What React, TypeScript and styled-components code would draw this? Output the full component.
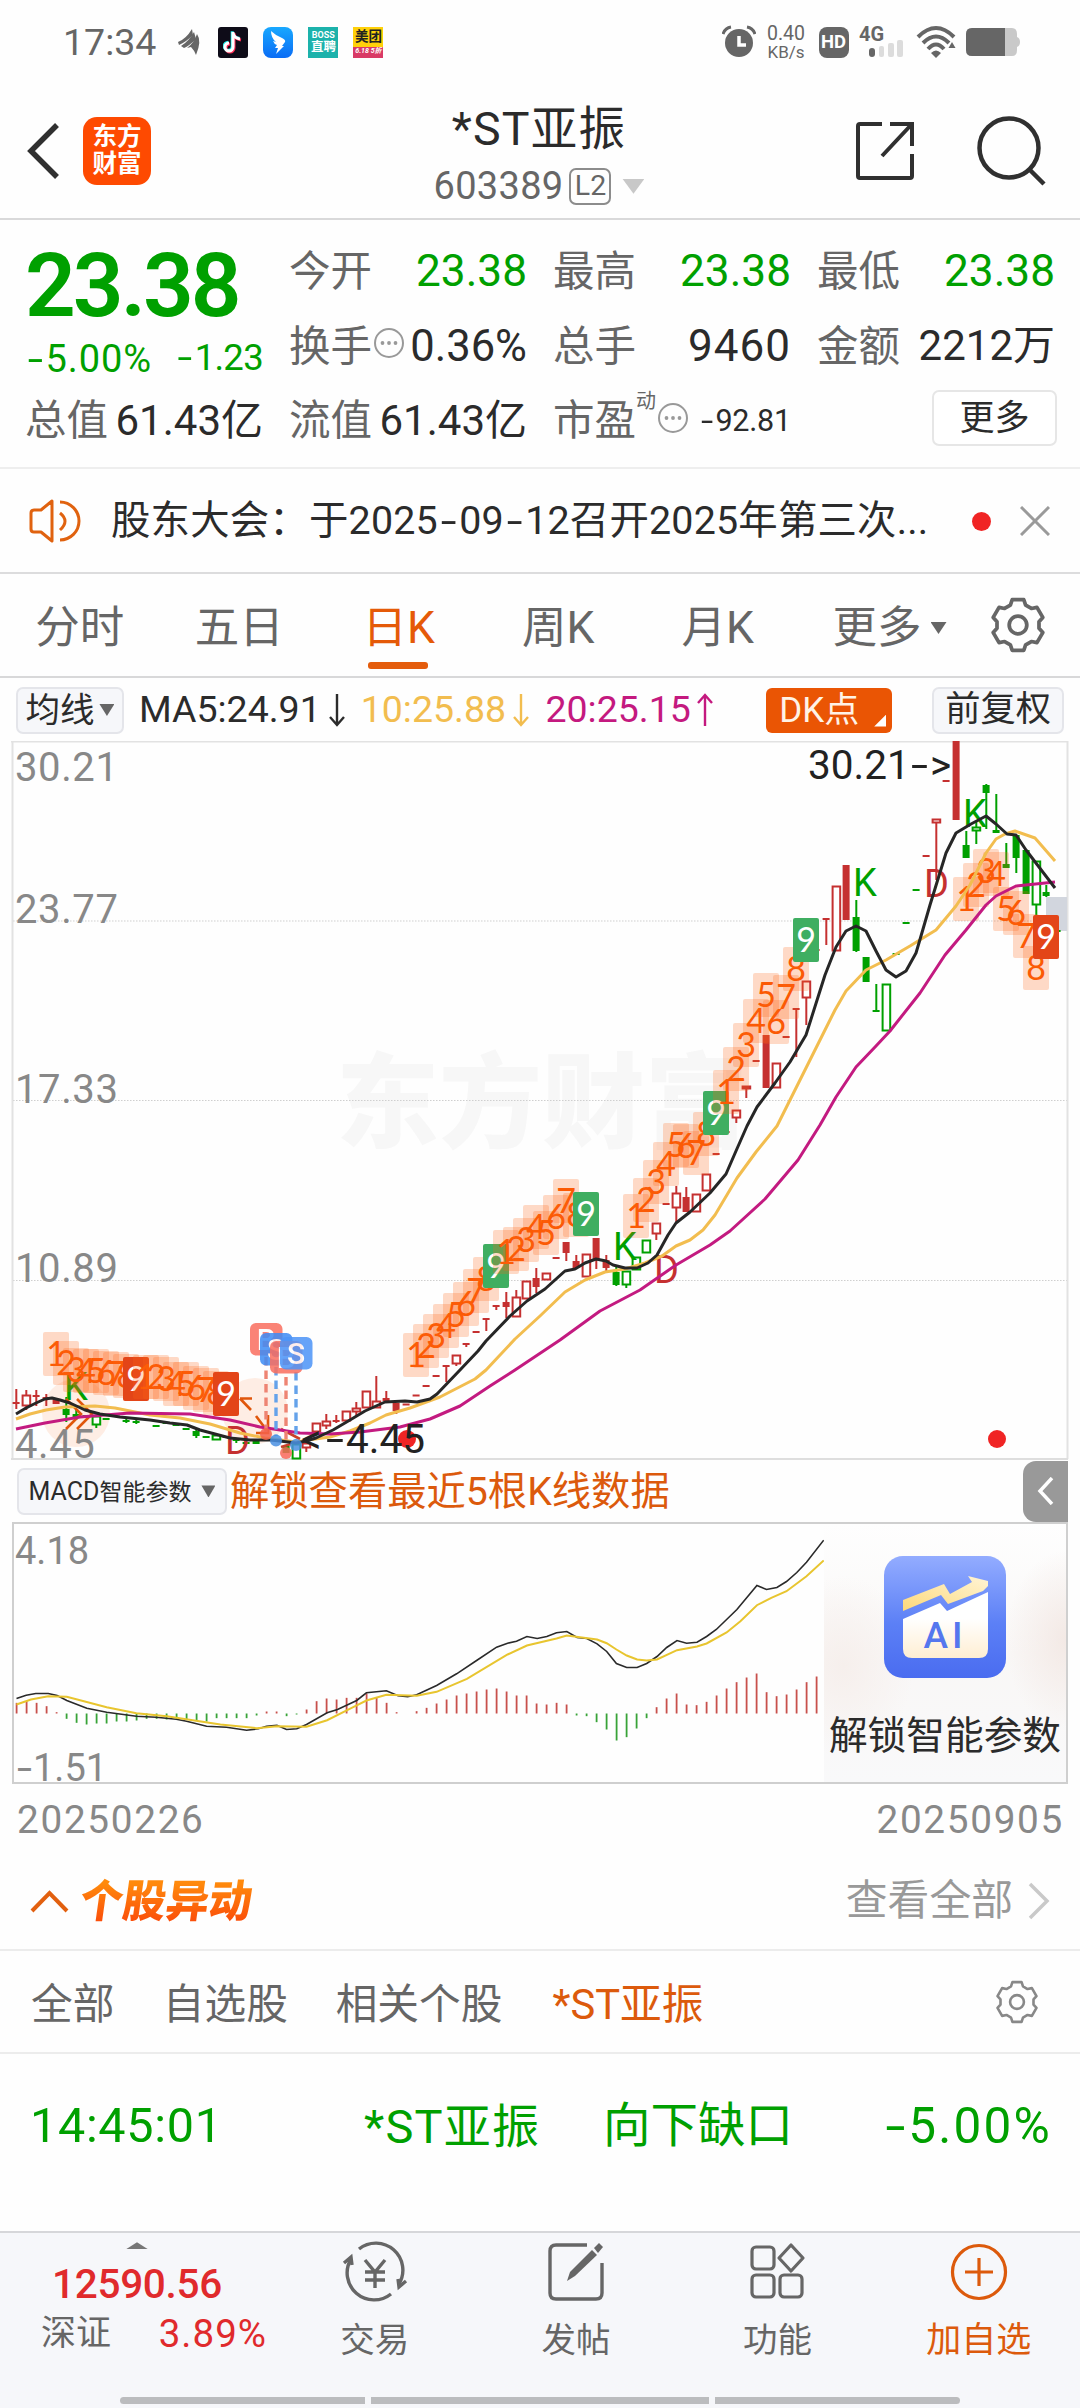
import React from "react";
import styled, { createGlobalStyle, css } from "styled-components";

const SANS = `Roboto, "Noto Sans CJK SC", "Liberation Sans", sans-serif`;
const GREEN = "#00a000";
const ORANGE = "#dc5a0c";
const RED = "#e02a2c";
const CANDLE_RED = "#c53030";

const GlobalStyle = createGlobalStyle`
  * { box-sizing: border-box; }
  html, body { margin: 0; padding: 0; background: #fff; }
  body { font-family: ${SANS}; line-height: 1; color: #2b2b2b; width: 1080px; overflow-x: hidden; }
  svg { display: block; flex: none; }
`;

const Screen = styled.div`
  width: 1080px;
  height: 2408px;
  display: flex;
  flex-direction: column;
  background: #fefefe;
  overflow: hidden;
  white-space: nowrap;
`;

/* ---------- text helpers ---------- */

const Txt = styled.span<{ $s: number; $c?: string; $w?: number; $ls?: number }>`
  font-size: ${(p) => p.$s}px;
  color: ${(p) => p.$c ?? "#2b2b2b"};
  font-weight: ${(p) => p.$w ?? 400};
  letter-spacing: ${(p) => p.$ls ?? 0}px;
`;

const Dash = styled.span`
  display: inline-block;
  width: 0.54em;
  text-align: center;
  letter-spacing: 0;
  transform: scaleX(1.45);
`;

function Num({ children }: { children: string }) {
  const parts = children.split("-");
  return (
    <>
      {parts.map((p, i) => (
        <React.Fragment key={i}>
          {i > 0 && <Dash>-</Dash>}
          {p}
        </React.Fragment>
      ))}
    </>
  );
}

const Triangle = styled.i<{ $w: number; $h: number; $c: string; $up?: boolean }>`
  display: block;
  width: ${(p) => p.$w}px;
  height: ${(p) => p.$h}px;
  background: ${(p) => p.$c};
  clip-path: ${(p) => (p.$up ? "polygon(50% 0, 100% 100%, 0 100%)" : "polygon(0 0, 100% 0, 50% 100%)")};
`;

/* ---------- status bar ---------- */

const StatusBar = styled.header`
  height: 84px;
  padding: 1px 60px 0 63px;
  display: flex;
  align-items: center;
  justify-content: space-between;
`;

const StatusGroup = styled.div<{ $gap: number }>`
  display: flex;
  align-items: center;
  gap: ${(p) => p.$gap}px;
`;

const Clock = styled.span`
  font-size: 37.5px;
  color: #666;
  margin-right: 6px;
`;

const AppTile = styled.div<{ $bg: string; $r: number }>`
  width: 30px;
  height: 31px;
  border-radius: ${(p) => p.$r}px;
  background: ${(p) => p.$bg};
  display: flex;
  flex-direction: column;
  align-items: center;
  justify-content: center;
  gap: 1px;
`;

const Promo = styled.span`
  font-size: 7px;
  font-style: italic;
  font-weight: 700;
  color: #fff;
  margin-top: 3px;
`;

const Speed = styled.div`
  display: flex;
  flex-direction: column;
  align-items: center;
  gap: 1px;
  width: 40px;
  margin-right: 2px;
`;

/* ---------- title bar ---------- */

const TitleBar = styled.div`
  height: 136px;
  padding: 0 34px 0 26px;
  border-bottom: 2px solid #d9d9da;
  display: grid;
  grid-template-columns: 300px 1fr 300px;
  align-items: center;
`;

const TitleLeft = styled.div`
  display: flex;
  align-items: center;
  gap: 23px;
`;

const Logo = styled.div`
  width: 68px;
  height: 68px;
  border-radius: 14px;
  background: #fe4a01;
  display: flex;
  flex-direction: column;
  align-items: center;
  justify-content: center;
  gap: 3px;
`;

const TitleMid = styled.div`
  display: flex;
  flex-direction: column;
  align-items: center;
  gap: 15px;
  padding-left: 6px;
  padding-top: 9px;
`;

const CodeLine = styled.div`
  display: flex;
  align-items: center;
  gap: 6px;
`;

const Level = styled.span`
  width: 42px;
  height: 37px;
  border: 2px solid #8c8c8c;
  border-radius: 7px;
  display: flex;
  align-items: center;
  justify-content: center;
  margin-right: 5px;
`;

const TitleRight = styled.div`
  display: flex;
  align-items: center;
  justify-content: flex-end;
  gap: 61px;
`;

/* ---------- quote ---------- */

const Quote = styled.section`
  height: 249px;
  padding: 14px 25px 0 25px;
  border-bottom: 2px solid #eeeeee;
  display: grid;
  grid-template-columns: repeat(4, 238px);
  grid-template-rows: 75px 75px 74px;
  column-gap: 26px;
`;

const PriceBlock = styled.div`
  grid-row: 1 / span 2;
  display: flex;
  flex-direction: column;
  padding-top: 7px;
  gap: 10px;
`;

const ChangeLine = styled.div`
  display: flex;
  justify-content: space-between;
`;

const Cell = styled.div`
  display: flex;
  align-items: center;
  justify-content: space-between;
`;

const Label = styled.span`
  display: flex;
  align-items: center;
  font-size: 41.5px;
  color: #666;
`;

const InfoIcon = styled.svg`
  width: 32px;
  height: 32px;
  margin: -6px 0 0 1px;
`;

const Sup = styled.sup`
  font-size: 20px;
  align-self: flex-start;
  margin: -9px 0 0 0;
  line-height: 1;
`;

const MoreButton = styled.button`
  justify-self: end;
  align-self: center;
  margin: -5px -2px 0 0;
  width: 125px;
  height: 56px;
  border: 2px solid #e6e6e6;
  border-radius: 7px;
  background: #fff;
  color: #2b2b2b;
  font: 400 35px ${SANS};
  line-height: 1;
  padding: 0;
`;

/* ---------- notice ---------- */

const Notice = styled.section`
  height: 105px;
  padding: 2px 30px 0 29px;
  border-bottom: 2px solid #dcdcdd;
  display: flex;
  align-items: center;
`;

const NoticeText = styled.span`
  margin-left: 30px;
  width: 861px;
  font-size: 39.4px;
  letter-spacing: 0.2px;
  color: #2b2b2b;
`;

const Dot = styled.i`
  width: 19px;
  height: 19px;
  border-radius: 50%;
  background: #f02424;
  margin-right: 29px;
`;

/* ---------- period tabs ---------- */

const Tabs = styled.nav`
  height: 104px;
  border-bottom: 2px solid #d8d8d9;
  display: flex;
  align-items: center;
`;

const Tab = styled.div<{ $on?: boolean; $w?: number }>`
  width: ${(p) => p.$w ?? 159.5}px;
  height: 102px;
  position: relative;
  display: flex;
  align-items: center;
  justify-content: center;
  gap: 9px;
  padding-top: 7px;
  font-size: 44.5px;
  color: ${(p) => (p.$on ? "#e55a08" : "#666")};
  ${(p) =>
    p.$on &&
    css`
      &::after {
        content: "";
        position: absolute;
        left: 49px;
        bottom: 7px;
        width: 60px;
        height: 7px;
        border-radius: 3px;
        background: #e45c0c;
      }
    `}
`;

const TabSettings = styled.div`
  margin-left: 8px;
  padding-top: 1px;
`;

/* ---------- indicator toolbar ---------- */

const MaBar = styled.div`
  height: 63px;
  padding: 2px 16px 0;
  display: flex;
  align-items: center;
`;

const Chip = styled.div<{ $w: number; $pad?: number }>`
  width: ${(p) => p.$w}px;
  height: 47px;
  border: 2px solid #e4e5ea;
  border-radius: 7px;
  background: #f6f7fa;
  display: flex;
  align-items: center;
  justify-content: center;
  gap: ${(p) => p.$pad ?? 0}px;
`;

const MaItem = styled.div<{ $c: string; $w: number }>`
  width: ${(p) => p.$w}px;
  margin-left: 15px;
  display: flex;
  align-items: center;
  justify-content: space-between;
  font-size: 37.5px;
  color: ${(p) => p.$c};
`;

const DkButton = styled.div`
  position: relative;
  margin-left: 52px;
  margin-right: 40px;
  width: 126px;
  height: 45px;
  border-radius: 6px;
  background: #ea5504;
  color: #fff3e6;
  font-size: 35px;
  display: flex;
  align-items: center;
  padding-left: 13px;
  &::after {
    content: "";
    position: absolute;
    right: 6px;
    bottom: 6px;
    width: 12px;
    height: 12px;
    background: #fff;
    clip-path: polygon(100% 0, 100% 100%, 0 100%);
  }
`;

/* ---------- charts ---------- */

const KChart = styled.div`
  height: 719px;
`;

const MacdBar = styled.div`
  height: 63px;
  padding: 1px 12px 0 17px;
  display: flex;
  align-items: center;
`;

const MacdHint = styled.span`
  margin-left: 3px;
  padding-top: 2px;
  font-size: 39.3px;
  color: ${ORANGE};
`;

const Collapse = styled.div`
  margin-left: auto;
  width: 45px;
  height: 61px;
  border-radius: 13px 0 0 13px;
  background: #999;
  display: flex;
  align-items: center;
  justify-content: center;
`;

const MacdPanel = styled.div`
  height: 262px;
  margin: 0 12px;
  width: 1056px;
  border: 2px solid #cfcfcf;
  display: flex;
`;

const Unlock = styled.div`
  flex: 1;
  display: flex;
  flex-direction: column;
  align-items: center;
  padding-top: 32px;
  gap: 39px;
  background: radial-gradient(ellipse 60px 90px at 100% 45%, #f3e9e5, rgba(243, 233, 229, 0)),
    radial-gradient(ellipse 70px 90px at 8% 55%, #f6efec, rgba(246, 239, 236, 0)),
    linear-gradient(180deg, #fefefe, #f9f7f6 50%, #f9f9fa);
`;

const Dates = styled.div`
  height: 66px;
  padding: 6px 16px 0 17px;
  display: flex;
  align-items: center;
  justify-content: space-between;
`;

/* ---------- movements ---------- */

const MoveHead = styled.div`
  height: 101px;
  padding: 3px 29px 0 30px;
  border-bottom: 2px solid #ececec;
  display: flex;
  align-items: center;
`;

const MoveTitle = styled.h2`
  margin: 0 auto 0 11px;
  font-size: 43px;
  font-weight: 900;
  transform: skewX(-8deg) scaleY(1.04);
  background: linear-gradient(180deg, #ff8a0c 15%, #fb4f0a 85%);
  -webkit-background-clip: text;
  background-clip: text;
  color: transparent;
  line-height: 1.2;
`;

const MoreArrow = styled.svg`
  margin-left: 14px;
`;

const Filters = styled.div`
  height: 103px;
  padding: 1px 41px 0 31px;
  border-bottom: 2px solid #ececec;
  display: flex;
  align-items: center;
`;

const Filter = styled.span<{ $on?: boolean; $w: number }>`
  width: ${(p) => p.$w}px;
  padding-top: 5px;
  font-size: 41.7px;
  color: ${(p) => (p.$on ? ORANGE : "#666")};
`;

const MoveRow = styled.div`
  height: 177px;
  padding: 0 28px 32px 30px;
  display: grid;
  grid-template-columns: 334px 239px 1fr auto;
  align-items: center;
`;

/* ---------- bottom bar ---------- */

const Bottom = styled.footer`
  height: 177px;
  border-top: 2px solid #d6d7da;
  background: #f6f7fa;
  display: flex;
  flex-direction: column;
`;

const NavRow = styled.div`
  display: flex;
  height: 164px;
`;

const IndexCell = styled.div`
  width: 274px;
  display: flex;
  flex-direction: column;
  align-items: center;
  padding-top: 9px;
`;

const IndexValue = styled.span`
  margin-top: 15px;
  font-size: 40.5px;
  font-weight: 500;
  letter-spacing: -0.3px;
  color: ${RED};
`;

const IndexLine = styled.div`
  width: 226px;
  margin: 10px 0 0 34px;
  display: flex;
  align-items: center;
  justify-content: space-between;
`;

const NavItem = styled.div`
  width: 201.4px;
  display: flex;
  flex-direction: column;
  align-items: center;
  padding-top: 8px;
  gap: 20px;
`;

const HomeBar = styled.div`
  display: flex;
  gap: 6px;
  margin-left: 120px;
  i {
    height: 7px;
    background: #bbbcbe;
  }
  i:nth-child(1) { width: 245px; border-radius: 4px 0 0 4px; }
  i:nth-child(2) { width: 338px; }
  i:nth-child(3) { width: 245px; border-radius: 0 4px 4px 0; }
`;

/* ---------- icons ---------- */

function Gear({ size, color, sw }: { size: number; color: string; sw: number }) {
  const pts: string[] = [];
  for (let k = 0; k < 6; k++) {
    const a = -90 + k * 60;
    [
      [a - 21, 20.5],
      [a - 13, 25],
      [a + 13, 25],
      [a + 21, 20.5],
    ].forEach(([deg, r]) => {
      const t = (deg * Math.PI) / 180;
      pts.push(`${(27 + r * Math.cos(t)).toFixed(2)},${(27 + r * Math.sin(t)).toFixed(2)}`);
    });
  }
  return (
    <svg width={size} height={size} viewBox="0 0 54 54" fill="none" stroke={color} strokeWidth={sw} strokeLinejoin="round">
      <polygon points={pts.join(" ")} />
      <circle cx="27" cy="27" r="8.5" />
    </svg>
  );
}

const MoreDots = () => (
  <InfoIcon viewBox="0 0 32 32">
    <circle cx="16" cy="16" r="14" fill="none" stroke="#999" strokeWidth="2" />
    <circle cx="9.5" cy="16" r="1.9" fill="#999" />
    <circle cx="16" cy="16" r="1.9" fill="#999" />
    <circle cx="22.5" cy="16" r="1.9" fill="#999" />
  </InfoIcon>
);

const Arrow = ({ up }: { up?: boolean }) => (
  <svg width="18" height="34" viewBox="0 0 18 34" fill="none" stroke="currentColor" strokeWidth="2.4">
    <path d={up ? "M9 33V2M2 10L9 2L16 10" : "M9 1V32M2 24L9 32L16 24"} />
  </svg>
);

/* ---------- candlestick data ---------- */

type Candle = [number, "r" | "R" | "g" | "G", number, number, number?, number?];

/* x, kind (lower case hollow, upper case filled), body top, body bottom, wick top, wick bottom */
const CANDLES: Candle[] = [
  [16, "R", 1402, 1404, 1389, 1409], [26, "r", 1395, 1406, 1390, 1410], [36, "R", 1395, 1397, 1390, 1406],
  [46, "R", 1397, 1399, 1394, 1406], [56, "R", 1399, 1404], [66, "G", 1409, 1415, 1397, 1422],
  [76, "G", 1414, 1417, 1410, 1420], [86, "G", 1415, 1418], [96, "g", 1416, 1425, 1416, 1428], [106, "G", 1418, 1420],
  [126, "G", 1420, 1422, 1418, 1423], [136, "G", 1421, 1423, 1419, 1424], [156, "G", 1425, 1427], [166, "G", 1422, 1424],
  [176, "G", 1424, 1426], [186, "G", 1428, 1430], [196, "G", 1431, 1436, 1429, 1438], [206, "G", 1436, 1438],
  [216, "g", 1435, 1440], [226, "G", 1436, 1438], [236, "G", 1439, 1441, 1438, 1443], [246, "G", 1442, 1444], [256, "G", 1441, 1444],
  [286, "G", 1446, 1453], [296, "g", 1444, 1459], [306, "r", 1443, 1448, 1438, 1452],
  [316, "r", 1423, 1432], [326, "r", 1421, 1426, 1414, 1429], [336, "R", 1420, 1422, 1415, 1423],
  [346, "r", 1411, 1421], [356, "r", 1408, 1412, 1402, 1416], [366, "r", 1391, 1408], [376, "r", 1401, 1408, 1376, 1408],
  [386, "R", 1398, 1401, 1391, 1402], [396, "R", 1403, 1411, 1403, 1414], [406, "R", 1403.5, 1405.5], [416, "R", 1394.5, 1396.5],
  [426, "R", 1385, 1387], [436, "R", 1375, 1377], [446, "R", 1365, 1367, 1366, 1382], [456, "r", 1355, 1364, 1355, 1366],
  [466, "R", 1343, 1345, 1343, 1347], [476, "R", 1331, 1333], [486, "R", 1318, 1320, 1319, 1331], [496, "R", 1305, 1307, 1306, 1310],
  [506, "R", 1302, 1307, 1292, 1318], [516, "r", 1297, 1317, 1290, 1317], [526, "r", 1281, 1299], [536, "R", 1278, 1287, 1268, 1293],
  [546, "r", 1273, 1280], [556, "R", 1257, 1259], [566, "R", 1242, 1253, 1242, 1261], [576, "R", 1261, 1268, 1255, 1268],
  [586, "r", 1254, 1277], [596, "R", 1238, 1259, 1238, 1269], [606, "R", 1260, 1268, 1255, 1272], [616, "G", 1272, 1285, 1266, 1286],
  [626, "g", 1271, 1285, 1271, 1288], [636, "g", 1257, 1270], [646, "g", 1240, 1253], [656, "r", 1223, 1234, 1223, 1240],
  [666, "R", 1203, 1205], [676, "r", 1193, 1208, 1186, 1222], [686, "R", 1197, 1212, 1187, 1212], [696, "r", 1194, 1212],
  [706, "r", 1174, 1191], [716, "R", 1153, 1155], [726, "R", 1131, 1133], [736, "r", 1110, 1118, 1110, 1123],
  [746, "r", 1086, 1089, 1086, 1098], [756, "R", 1060, 1062], [766, "R", 1035, 1088], [776, "r", 1063, 1088],
  [786, "R", 1036, 1038], [796, "R", 1008, 1010, 1009, 1057], [806, "r", 981, 998, 981, 1025], [816, "R", 949, 951],
  [826, "R", 918, 920, 919, 945], [836, "r", 886, 951], [846, "R", 865, 920], [856, "G", 917, 951, 900, 952],
  [866, "G", 957, 982], [876, "G", 1010, 1012, 984, 1011], [886, "g", 984, 1031], [896, "G", 953, 955], [906, "G", 922, 924],
  [916, "G", 889, 891], [926, "R", 855, 857], [936, "r", 819, 823, 819, 880], [946, "R", 780, 782], [956, "R", 741, 820],
  [966, "G", 845, 858, 831, 858], [976, "g", 827, 831, 822, 844], [986, "G", 785, 793, 784, 829], [996, "G", 830, 833, 794, 833],
  [1006, "G", 864, 868, 843, 868], [1016, "G", 835, 858, 835, 873], [1026, "G", 850, 894], [1036, "g", 861, 905, 861, 917],
  [1046, "G", 892, 896, 885, 897], [1057, "G", 930, 932],
];

const MA5 =
  "16,1414 26,1408 36,1403 45,1399 52,1398 60,1400 70,1403 85,1410 100,1414 120,1417 150,1420 170,1423 187,1425 200,1430 215,1434 230,1438 250,1440 270,1440 280,1441 296,1443 306,1441 316,1438 333,1430 350,1420 365,1411 385,1402 405,1401 417,1402 430,1399 437,1394 460,1370 478,1351 486,1341 510,1316 527,1301 545,1289 565,1271 575,1269 585,1263 596,1259 606,1261 613,1265 625,1268 637,1268 648,1263 657,1255 668,1235 676,1223 690,1212 710,1193 726,1174 736,1151 747,1126 757,1107 775,1083 790,1062 806,1035 825,975 836,947 846,931 856,926 866,931 876,951 886,970 896,977 906,971 916,953 921,936 930,905 946,853 956,833 971,824 986,816 996,824 1007,834 1016,835 1026,850 1055,888";
const MA10 =
  "16,1419 30,1414 46,1410 65,1407 95,1406 115,1408 150,1415 180,1418 210,1424 240,1433 265,1438 296,1442 315,1439 330,1437 350,1431 370,1423 386,1415 410,1408 440,1397 475,1379 486,1370 515,1339 540,1316 565,1292 585,1280 605,1272 625,1269 645,1263 662,1256 676,1246 690,1240 703,1230 715,1215 737,1178 756,1152 777,1126 800,1080 825,1030 835,1010 846,991 866,970 886,960 910,946 936,930 956,906 970,885 986,853 996,839 1005,834 1015,831 1035,838 1055,861";
const MA20 =
  "16,1429 45,1423 80,1417 130,1413 190,1414 230,1420 260,1427 300,1433 330,1434 360,1432 400,1427 430,1419 460,1406 490,1386 515,1370 560,1340 600,1311 640,1290 676,1265 710,1245 730,1231 765,1199 798,1160 820,1125 836,1097 856,1067 876,1046 890,1031 920,993 945,955 966,930 986,905 996,896 1016,886 1055,882";

/* Countdown marks: [x centre, top, digit]; nines are solid, tinted by trend. */
type Mark = [number, number, string];
const MARKS: Mark[] = [
  [56, 1332, "1"], [66, 1341, "2"], [76, 1348, "3"], [86, 1349, "4"], [96, 1349, "5"], [106, 1351, "6"], [116, 1352, "7"], [126, 1354, "8"], [136, 1357, "9r"],
  [146, 1355, "1"], [156, 1355, "2"], [166, 1357, "3"], [176, 1362, "4"], [186, 1362, "5"], [196, 1366, "6"], [206, 1368, "7"], [216, 1371, "8"], [226, 1372, "9r"],
  [416, 1333, "1"], [426, 1324, "2"], [436, 1314, "3"], [446, 1304, "4"], [456, 1293, "5"], [466, 1282, "6"], [476, 1269, "7"], [486, 1257, "8"], [496, 1244, "9g"],
  [506, 1230, "1"], [516, 1227, "2"], [526, 1218, "3"], [536, 1205, "4"], [546, 1211, "5"], [556, 1195, "6"], [566, 1179, "7"], [576, 1193, "8"], [586, 1192, "9g"],
  [636, 1194, "1"], [646, 1178, "2"], [656, 1160, "3"], [666, 1142, "4"], [676, 1123, "5"], [686, 1124, "6"], [696, 1131, "7"], [706, 1112, "8"], [716, 1091, "9g"],
  [726, 1070, "1"], [736, 1047, "2"], [746, 1023, "3"], [756, 999, "4"], [766, 973, "5"], [776, 1000, "6"], [786, 975, "7"], [796, 947, "8"], [806, 918, "9g"],
  [966, 877, "1"], [976, 863, "2"], [986, 849, "3"], [996, 852, "4"], [1006, 887, "5"], [1016, 891, "6"], [1026, 914, "7"], [1036, 946, "8"], [1046, 915, "9r"],
];

const BADGES: [number, number, string, string][] = [
  [250, 1323, "B", "#fa6f60"],
  [260, 1333, "S", "#3f8cf5"],
  [270, 1341, "B", "#fa6f60"],
  [280, 1337, "S", "#4e95f8"],
];

function CandleChart() {
  return (
    <svg width="1080" height="719" viewBox="0 741 1080 719" fontFamily={SANS}>
      <text x="336" y="1140" fontSize="103" fontWeight="900" fill="#f7f7f7">东方财富</text>
      {[921, 1100.5, 1280.5].map((y) => (
        <line key={y} x1="13" x2="1067" y1={y} y2={y} stroke="#cfcfcf" strokeDasharray="1.5 1.5" />
      ))}
      <path d="M12.5 741V1459M11 741.5H1068M1067.5 741V1459" fill="none" stroke="#e2e2e2" strokeWidth="2" />
      <path d="M11 1459H1068" stroke="#dedede" strokeWidth="2" />
      <circle cx="76" cy="1413" r="34" fill="#ff7a33" opacity="0.13" />
      <circle cx="255" cy="1411" r="33" fill="#ff7a33" opacity="0.13" />
      <g fill="#888" fontSize="40" letterSpacing="0.6">
        <text x="15" y="780.5">30.21</text>
        <text x="15" y="923">23.77</text>
        <text x="15" y="1103">17.33</text>
        <text x="15" y="1282">10.89</text>
        <text x="15" y="1457.5">4.45</text>
      </g>
      <rect x="1046" y="897" width="21" height="34" fill="#d2d6de" />

      {CANDLES.map(([x, k, t, b, wt, wb]) => {
        const color = k.toLowerCase() === "r" ? CANDLE_RED : GREEN;
        const hollow = k === k.toLowerCase();
        return (
          <g key={x} stroke={color} strokeWidth="2">
            {wt !== undefined && <line x1={x + 0.3} x2={x + 0.3} y1={wt} y2={wb} />}
            {hollow ? (
              <rect x={x - 3.4} y={t + 0.5} width="7.6" height={Math.max(b - t - 1, 2)} fill="#fff" />
            ) : (
              <rect x={x - 3.4} y={t} width="7" height={b - t} fill={color} stroke="none" />
            )}
          </g>
        );
      })}

      <g fontSize="38" fill={GREEN}>
        <text x="64" y="1400">K</text>
        <text x="613" y="1260">K</text>
        <text x="853" y="896">K</text>
        <text x="963" y="827">K</text>
      </g>
      <g fontSize="38" fill={CANDLE_RED}>
        <text x="225" y="1454">D</text>
        <text x="654" y="1283">D</text>
        <text x="924" y="897">D</text>
      </g>

      <g fontFamily="Lato, Roboto, sans-serif" fontSize="34" textAnchor="middle">
        {MARKS.map(([x, y, d]) => {
          const nine = d.length > 1;
          const fill = d === "9r" ? "#e34518" : d === "9g" ? "#3fae61" : "#ff6414";
          return (
            <g key={x}>
              <rect x={x - 13} y={y} width="26" height="44" rx="2" fill={fill} opacity={nine ? 1 : 0.24} />
              <text x={x} y={y + 34} fill={nine ? "#fff" : "#fb5a04"}>
                {d[0]}
              </text>
            </g>
          );
        })}
      </g>

      <g fill="none" stroke="#e0560b" strokeWidth="2.6">
        <path d="M66 1399L81 1414L66 1429M77 1399L92 1414L77 1429" />
        <path d="M252 1398.5H240M240 1398.5L251 1410M256 1416L268 1432M268 1415V1433H256" />
        <path d="M281 1429L300 1439M281 1447L291 1444" stroke="#c9402a" />
      </g>

      <g fill="none" strokeLinejoin="round" strokeWidth="3">
        <polyline points={MA10} stroke="#f2bd4f" />
        <polyline points={MA20} stroke="#c31a80" />
        <polyline points={MA5} stroke="#262626" />
      </g>

      <g strokeWidth="3.4" strokeDasharray="8.5 5">
        <path d="M266 1357V1432M286 1377V1440" stroke="#ee8473" />
        <path d="M276 1367V1436M296 1372V1440" stroke="#64a2ea" />
      </g>
      <g opacity="0.85">
        <circle cx="266" cy="1434" r="6" fill="#f4624c" />
        <circle cx="276" cy="1440.5" r="6" fill="#4a90e2" />
        <circle cx="286" cy="1453" r="6" fill="#fa6a5a" />
        <circle cx="296" cy="1445" r="6" fill="#4a90e2" />
      </g>
      {BADGES.map(([x, y, l, c]) => (
        <g key={x} opacity="0.86">
          <rect x={x} y={y} width="32.5" height="32.5" rx="6" fill={c} />
          <text x={x + 16.2} y={y + 27} fontSize="30" fontWeight="500" textAnchor="middle" fill="#fff">
            {l}
          </text>
        </g>
      ))}

      <circle cx="407" cy="1439" r="9" fill="#f02424" />
      <circle cx="997" cy="1439" r="9" fill="#f02424" />
      <text x="301" y="1452.5" fontSize="40.5" fill="#222">
        &lt;<tspan x="326" textLength="18" lengthAdjust="spacingAndGlyphs">-</tspan>
        <tspan x="346">4.45</tspan>
      </text>
      <text x="808" y="779" fontSize="40.5" fill="#222">
        30.21<tspan x="911" textLength="17" lengthAdjust="spacingAndGlyphs">-</tspan>
        <tspan x="930">&gt;</tspan>
      </text>
    </svg>
  );
}

/* ---------- MACD data ---------- */

const UNIT_X = 1.452;
const UNIT_Y = 3;
const ZERO = 822;
const BARS = [
  790, 785, 790, 800, 818, 838, 850, 855, 852, 852, 846, 846, 843, 838, 838, 840, 838, 840, 843, 846, 836, 836, 836, 836, 828, 816, 816, 830, 825,
  810, 785, 777, 780, 775, 775, 762, 775, 790, 818, 822, 815, 805, 792, 780, 768, 762, 756, 750, 747, 756, 768, 768, 792, 795, 790, 795, 828, 830,
  848, 870, 903, 893, 867, 836, 803, 777, 762, 795, 797, 787, 768, 747, 728, 714, 702, 758, 770, 765, 750, 728, 711,
];
const DIF = [
  24, 777, 38, 767, 52, 762, 70, 762, 83, 768, 97, 783, 126, 806, 155, 818, 198, 830, 227, 833, 256, 839, 271, 845, 300, 860, 329, 863, 358, 872, 375,
  868, 387, 860, 402, 857, 416, 870, 431, 868, 445, 855, 475, 820, 490, 810, 518, 783, 532, 760, 561, 754, 578, 769, 592, 772, 605, 766, 634, 738, 663,
  703, 692, 663, 721, 623, 737, 611, 750, 605, 765, 591, 780, 597, 794, 591, 808, 580, 823, 576, 838, 594, 852, 597, 867, 613, 881, 636, 895, 672, 910,
  684, 925, 684, 939, 672, 954, 651, 968, 624, 983, 603, 997, 611, 1012, 608, 1026, 591, 1040, 570, 1070, 510, 1099, 438, 1113, 450, 1128, 444, 1142,
  426, 1157, 399, 1171, 368, 1196, 302,
];
const DEA = [
  24, 795, 45, 780, 70, 770, 97, 772, 155, 803, 198, 821, 242, 830, 280, 842, 320, 855, 373, 866, 402, 860, 445, 862, 475, 842, 510, 806, 532, 783, 561,
  766, 605, 769, 634, 757, 678, 718, 737, 645, 765, 618, 808, 597, 823, 588, 867, 600, 881, 611, 895, 630, 910, 648, 925, 660, 939, 663, 954, 660, 983,
  632, 1012, 621, 1026, 612, 1055, 579, 1075, 545, 1099, 497, 1120, 475, 1142, 455, 1171, 410, 1196, 363,
];

function toPoints(values: number[]) {
  const out: string[] = [];
  for (let i = 0; i < values.length; i += 2) {
    out.push(`${(values[i] / UNIT_X).toFixed(1)},${(values[i + 1] / UNIT_Y).toFixed(1)}`);
  }
  return out.join(" ");
}

function MacdChart() {
  return (
    <svg width="810" height="258" viewBox="14 84.5 810 258" fontFamily={SANS}>
      {BARS.map((v, i) => (
        <line key={i} x1={16.6 + i * 10} x2={16.6 + i * 10} y1={v / UNIT_Y} y2={ZERO / UNIT_Y} stroke={v < ZERO ? "#c8504c" : "#38a338"} strokeWidth="1.8" />
      ))}
      <polyline points={toPoints(DIF)} fill="none" stroke="#2a2a2a" strokeWidth="1.6" />
      <polyline points={toPoints(DEA)} fill="none" stroke="#e8c52f" strokeWidth="2" />
      <g fill="#888" fontSize="38">
        <text x="15" y="124">4.18</text>
        <text x="17" y="341.5">
          <tspan textLength="15" lengthAdjust="spacingAndGlyphs">-</tspan>
          <tspan x="33">1.51</tspan>
        </text>
      </g>
    </svg>
  );
}

function AiLogo() {
  return (
    <svg width="122" height="122" viewBox="0 0 122 122">
      <defs>
        <linearGradient id="aiBlue" x1="0" y1="0" x2="0" y2="1">
          <stop offset="0" stopColor="#93acff" />
          <stop offset="0.55" stopColor="#5c80f6" />
          <stop offset="1" stopColor="#4a6cf0" />
        </linearGradient>
        <linearGradient id="aiGold" x1="1" y1="0" x2="0" y2="1">
          <stop offset="0" stopColor="#fff4d6" />
          <stop offset="1" stopColor="#fdd97a" />
        </linearGradient>
        <linearGradient id="aiCard" x1="0" y1="0" x2="0" y2="1">
          <stop offset="0.4" stopColor="#ffffff" />
          <stop offset="1" stopColor="#ffeed2" />
        </linearGradient>
      </defs>
      <rect width="122" height="122" rx="19" fill="url(#aiBlue)" />
      <path d="M19 63L56 47L63 55L104 36V93Q104 102 95 102H28Q19 102 19 93Z" fill="url(#aiCard)" />
      <path d="M19 44L60 28L66 38L88 26L84 20L104 25V30L99 35L64 48L57 39L19 55Z" fill="url(#aiGold)" />
      <text x="61" y="91.5" textAnchor="middle" fontFamily={SANS} fontSize="37" fontWeight="500" letterSpacing="4" fill="#5577ee">
        AI
      </text>
    </svg>
  );
}

/* ---------- page ---------- */

function Status() {
  return (
    <StatusBar>
      <StatusGroup $gap={15}>
        <Clock>17:34</Clock>
        <svg width="26" height="28" viewBox="0 0 26 28" fill="#666">
          <path d="M1 14Q9 11 15 1L16 7Q9 14 2 17Z" />
          <path d="M4 18Q12 13 17 4L19 11Q12 18 7 20Z" />
          <path d="M10 20Q17 15 20 6Q25 13 19 27Q17 22 14 19Z" />
        </svg>
        <AppTile $bg="#0e0c18" $r={3}>
          <svg width="20" height="24" viewBox="0 0 20 24" fill="none" strokeWidth="3">
            <path d="M10 2V17A4 4 0 1 1 6 13M10 3Q11 8 17 9" stroke="#25f4ee" transform="translate(-0.8 -0.8)" />
            <path d="M10 2V17A4 4 0 1 1 6 13M10 3Q11 8 17 9" stroke="#fe2c55" transform="translate(1 1)" />
            <path d="M10 2V17A4 4 0 1 1 6 13M10 3Q11 8 17 9" stroke="#fff" />
          </svg>
        </AppTile>
        <AppTile $bg="linear-gradient(180deg,#18a8ff,#0a6cf5)" $r={8}>
          <svg width="18" height="24" viewBox="0 0 18 24" fill="#fff">
            <path d="M2 1Q6 5 13 8Q17 10 16 12L13 16H15L7 24L9 18H6L8 15Q5 14 4 11L7 12Q2 8 2 1Z" />
          </svg>
        </AppTile>
        <AppTile $bg="#1cb2ab" $r={0}>
          <Txt $s={9} $c="#fff" $w={700}>BOSS</Txt>
          <Txt $s={12.5} $c="#fff" $w={700}>直聘</Txt>
        </AppTile>
        <AppTile $bg="linear-gradient(180deg,#ffd10a 64%,#d93a66 64%)" $r={0}>
          <Txt $s={13.5} $c="#222" $w={700}>美团</Txt>
          <Promo>6.18 5折</Promo>
        </AppTile>
      </StatusGroup>
      <StatusGroup $gap={10.5}>
        <svg width="34" height="34" viewBox="0 0 34 34">
          <circle cx="17" cy="18" r="14" fill="#666" />
          <path d="M1 9Q3 3 9 2M33 9Q31 3 25 2" stroke="#666" strokeWidth="3" fill="none" />
          <path d="M17 11V20H24" stroke="#fff" strokeWidth="3.5" fill="none" />
        </svg>
        <Speed>
          <Txt $s={19.5} $c="#666">0.40</Txt>
          <Txt $s={17} $c="#666">KB/s</Txt>
        </Speed>
        <AppTile $bg="#666" $r={8}>
          <Txt $s={18.5} $c="#fff" $w={700}>HD</Txt>
        </AppTile>
        <svg width="46" height="34" viewBox="0 0 46 34">
          <text x="0" y="16" fontSize="20" fontWeight="700" fill="#666" fontFamily={SANS}>4G</text>
          <rect x="10" y="23" width="6" height="9" rx="3" fill="#666" />
          <rect x="20" y="21" width="5" height="11" rx="2" fill="#dcdcdc" />
          <rect x="29" y="18" width="6" height="14" rx="2" fill="#dcdcdc" />
          <rect x="38" y="15" width="6" height="17" rx="2" fill="#dcdcdc" />
        </svg>
        <svg width="40" height="34" viewBox="0 0 40 34" fill="none" stroke="#666" strokeWidth="4">
          <path d="M2 12Q20 -6 38 12M7 18Q20 5 33 18M12 24Q20 15 28 24" />
          <path d="M15 28Q20 23 25 28L20 33Z" fill="#666" stroke="none" />
          <path d="M36 17L39.5 23H32.5Z" fill="#666" stroke="none" />
        </svg>
        <svg width="54" height="28" viewBox="0 0 54 28">
          <path d="M6 0H46Q51 0 51 6V9Q54 10 54 14T51 19V22Q51 28 46 28H6Q0 28 0 22V6Q0 0 6 0Z" fill="#c9c9c9" />
          <path d="M6 0H39V28H6Q0 28 0 22V6Q0 0 6 0Z" fill="#666" />
        </svg>
      </StatusGroup>
    </StatusBar>
  );
}

function Header() {
  return (
    <TitleBar>
      <TitleLeft>
        <svg width="34" height="56" viewBox="0 0 34 56" fill="none" stroke="#303030" strokeWidth="5.5">
          <path d="M31 2L5 28L31 54" />
        </svg>
        <Logo>
          <Txt $s={24.5} $c="#fff" $w={700}>东方</Txt>
          <Txt $s={24.5} $c="#fff" $w={700}>财富</Txt>
        </Logo>
      </TitleLeft>
      <TitleMid>
        <Txt $s={46.5} $ls={1.2}>*ST亚振</Txt>
        <CodeLine>
          <Txt $s={38} $c="#666" $ls={0.3}>603389</Txt>
          <Level>
            <Txt $s={28.5} $c="#666">L2</Txt>
          </Level>
          <Triangle $w={22} $h={15} $c="#c8c8c8" />
        </CodeLine>
      </TitleMid>
      <TitleRight>
        <svg width="60" height="60" viewBox="0 0 60 60" fill="none" stroke="#303030" strokeWidth="4">
          <path d="M27 3H5Q3 3 3 5V55Q3 57 5 57H55Q57 57 57 55V33M35 3H57V25M56 4L27 35" />
        </svg>
        <svg width="70" height="70" viewBox="0 0 70 70" fill="none" stroke="#303030" strokeWidth="4.5">
          <circle cx="33" cy="32" r="29.5" />
          <path d="M53 53L68 68" />
        </svg>
      </TitleRight>
    </TitleBar>
  );
}

function QuotePanel() {
  return (
    <Quote>
      <PriceBlock>
        <Txt $s={89} $c={GREEN} $w={600} $ls={-3}>23.38</Txt>
        <ChangeLine>
          <Txt $s={38} $c={GREEN} $ls={0.9}><Num>-5.00%</Num></Txt>
          <Txt $s={36.5} $c={GREEN} $ls={-0.7}><Num>-1.23</Num></Txt>
        </ChangeLine>
      </PriceBlock>
      <Cell><Label>今开</Label><Txt $s={44.2} $c={GREEN}>23.38</Txt></Cell>
      <Cell><Label>最高</Label><Txt $s={44.2} $c={GREEN}>23.38</Txt></Cell>
      <Cell><Label>最低</Label><Txt $s={44.2} $c={GREEN}>23.38</Txt></Cell>
      <Cell><Label>换手<MoreDots /></Label><Txt $s={43.5}>0.36%</Txt></Cell>
      <Cell><Label>总手</Label><Txt $s={44} $ls={1}>9460</Txt></Cell>
      <Cell><Label>金额</Label><Txt $s={42}>2212万</Txt></Cell>
      <Cell><Label>总值</Label><Txt $s={42}>61.43亿</Txt></Cell>
      <Cell><Label>流值</Label><Txt $s={42}>61.43亿</Txt></Cell>
      <Cell><Label>市盈<Sup>动</Sup><MoreDots /></Label><Txt $s={30.5} $ls={-0.2}><Num>-92.81</Num></Txt></Cell>
      <MoreButton>更多</MoreButton>
    </Quote>
  );
}

function NoticeBar() {
  return (
    <Notice>
      <svg width="52" height="44" viewBox="0 0 52 44" fill="none" stroke="#e0620f" strokeWidth="3" strokeLinejoin="round">
        <path d="M23 2L12 11H5Q2 11 2 14V30Q2 33 5 33H12L23 42Z" />
        <path d="M31 14Q41 22 31 31M31 3A19 19 0 0 1 31 41" />
      </svg>
      <NoticeText><Num>股东大会：于2025-09-12召开2025年第三次...</Num></NoticeText>
      <Dot />
      <svg width="30" height="30" viewBox="0 0 30 30" stroke="#9a9a9a" strokeWidth="3">
        <path d="M1 1L29 29M29 1L1 29" />
      </svg>
    </Notice>
  );
}

export default function App() {
  return (
    <>
      <GlobalStyle />
      <Screen>
        <Status />
        <Header />
        <QuotePanel />
        <NoticeBar />

        <Tabs>
          <Tab>分时</Tab>
          <Tab>五日</Tab>
          <Tab $on>日K</Tab>
          <Tab>周K</Tab>
          <Tab>月K</Tab>
          <Tab $w={184}>更多<Triangle $w={16} $h={12} $c="#666" /></Tab>
          <TabSettings><Gear size={56} color="#666" sw={3.6} /></TabSettings>
        </Tabs>

        <MaBar>
          <Chip $w={108} $pad={5}>
            <Txt $s={34.5}>均线</Txt>
            <Triangle $w={15} $h={12} $c="#666" />
          </Chip>
          <MaItem $c="#2b2b2b" $w={207}>MA5:24.91<Arrow /></MaItem>
          <MaItem $c="#f2bd4f" $w={170}>10:25.88<Arrow /></MaItem>
          <MaItem $c="#c4197f" $w={169}>20:25.15<Arrow up /></MaItem>
          <DkButton>DK点</DkButton>
          <Chip $w={132}><Txt $s={35.3}>前复权</Txt></Chip>
        </MaBar>

        <KChart><CandleChart /></KChart>

        <MacdBar>
          <Chip $w={210} $pad={10}>
            <Txt $s={25}>MACD<Txt $s={23}>智能参数</Txt></Txt>
            <Triangle $w={14} $h={12} $c="#666" />
          </Chip>
          <MacdHint>解锁查看最近5根K线数据</MacdHint>
          <Collapse>
            <svg width="18" height="28" viewBox="0 0 18 28" fill="none" stroke="#fff" strokeWidth="3.5">
              <path d="M15 1L3 14L15 27" />
            </svg>
          </Collapse>
        </MacdBar>

        <MacdPanel>
          <MacdChart />
          <Unlock>
            <AiLogo />
            <Txt $s={38.7}>解锁智能参数</Txt>
          </Unlock>
        </MacdPanel>

        <Dates>
          <Txt $s={38.7} $c="#888" $ls={1.7}>20250226</Txt>
          <Txt $s={38.7} $c="#888" $ls={1.7}>20250905</Txt>
        </Dates>

        <MoveHead>
          <svg width="39" height="24" viewBox="0 0 39 24" fill="none" stroke="#e2600f" strokeWidth="4">
            <path d="M2 22L19.5 4L37 22" />
          </svg>
          <MoveTitle>个股异动</MoveTitle>
          <Txt $s={41.8} $c="#999">查看全部</Txt>
          <MoreArrow width="24" height="38" viewBox="0 0 24 38" fill="none" stroke="#c9c9c9" strokeWidth="3.5">
            <path d="M3 2L20 19L3 36" />
          </MoreArrow>
        </MoveHead>

        <Filters>
          <Filter $w={132}>全部</Filter>
          <Filter $w={173}>自选股</Filter>
          <Filter $w={217}>相关个股</Filter>
          <Filter $w={443} $on>*ST亚振</Filter>
          <Gear size={44} color="#888" sw={3.2} />
        </Filters>

        <MoveRow>
          <Txt $s={48.5} $c={GREEN} $ls={0.7}>14:45:01</Txt>
          <Txt $s={47} $c={GREEN} $ls={1.2}>*ST亚振</Txt>
          <Txt $s={47.5} $c={GREEN}>向下缺口</Txt>
          <Txt $s={49.5} $c={GREEN} $ls={2.2}><Num>-5.00%</Num></Txt>
        </MoveRow>

        <Bottom>
          <NavRow>
            <IndexCell>
              <Triangle $w={22} $h={7} $c="#777" $up />
              <IndexValue>12590.56</IndexValue>
              <IndexLine>
                <Txt $s={35} $c="#666">深证</Txt>
                <Txt $s={38.5} $c={RED} $ls={1}>3.89%</Txt>
              </IndexLine>
            </IndexCell>
            <NavItem>
              <svg width="66" height="62" viewBox="0 0 66 62" fill="none" stroke="#666" strokeWidth="3.4">
                <path d="M17 8A27 27 0 0 1 57 43M49 53A27 27 0 0 1 9 18" />
                <path d="M2 22L9 16L10 24M64 40L57 46L56 38" />
                <path d="M23 19L33 31L43 19M33 31V47M23 31H43M23 39H43" />
              </svg>
              <Txt $s={34.5} $c="#666">交易</Txt>
            </NavItem>
            <NavItem>
              <svg width="62" height="62" viewBox="0 0 62 62" fill="none" stroke="#666" strokeWidth="3.4">
                <path d="M42 4H11Q5 4 5 10V52Q5 58 11 58H51Q57 58 57 52V22" />
                <path d="M22 40L25 31L47 9L52 14L30 35Z" fill="#666" stroke="none" />
                <path d="M49 7L54 2L58 6L53 12Z" fill="#666" stroke="none" />
              </svg>
              <Txt $s={34.5} $c="#666">发帖</Txt>
            </NavItem>
            <NavItem>
              <svg width="62" height="62" viewBox="0 0 62 62" fill="none" stroke="#666" strokeWidth="3.2">
                <rect x="6" y="6" width="22" height="22" rx="4" />
                <rect x="6" y="34" width="22" height="22" rx="4" />
                <rect x="34" y="34" width="22" height="22" rx="4" />
                <path d="M45 4L57 17L45 30L33 17Z" strokeLinejoin="round" />
              </svg>
              <Txt $s={34.5} $c="#666">功能</Txt>
            </NavItem>
            <NavItem>
              <svg width="62" height="62" viewBox="0 0 62 62" fill="none" stroke={ORANGE} strokeWidth="3.2">
                <circle cx="31" cy="31" r="26.5" />
                <path d="M31 17V45M17 31H45" />
              </svg>
              <Txt $s={35} $c={ORANGE}>加自选</Txt>
            </NavItem>
          </NavRow>
          <HomeBar><i /><i /><i /></HomeBar>
        </Bottom>
      </Screen>
    </>
  );
}
